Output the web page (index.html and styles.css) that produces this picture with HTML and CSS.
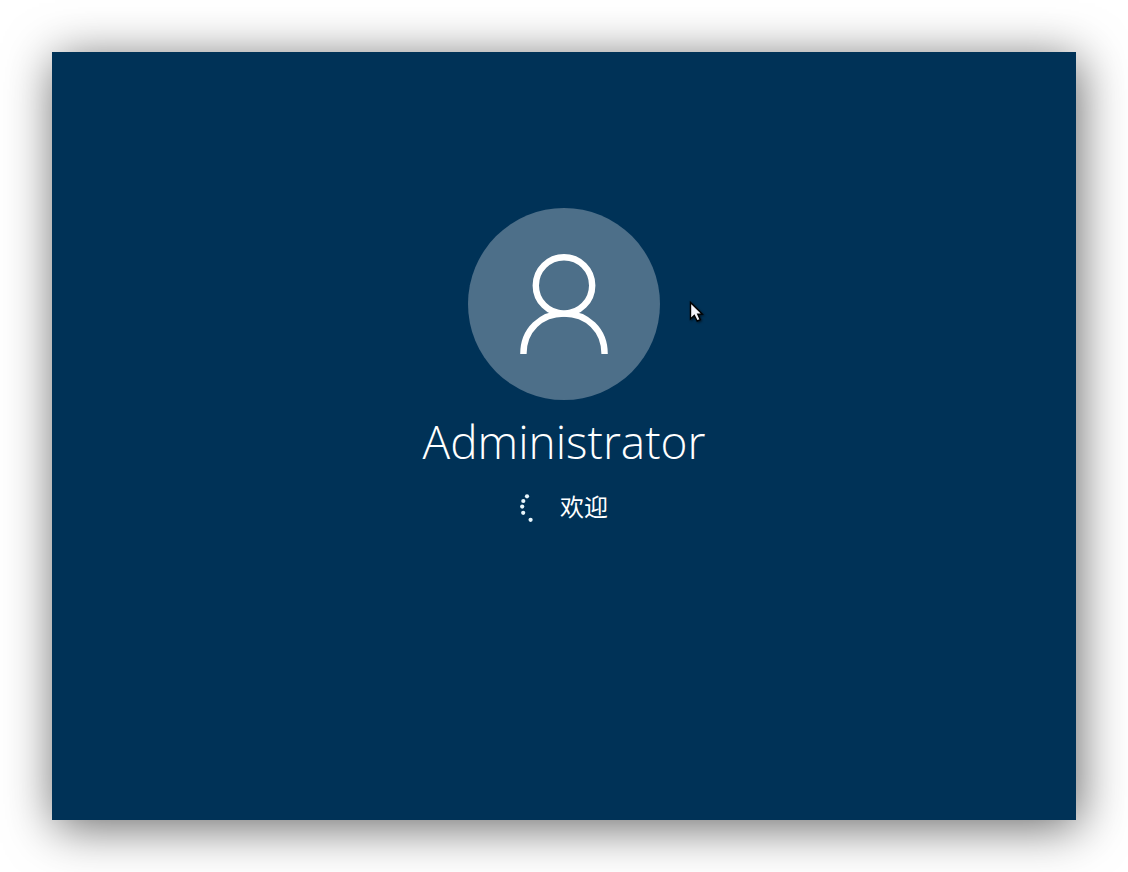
FILE: index.html
```html
<!DOCTYPE html>
<html lang="zh-CN">
<head>
<meta charset="utf-8">
<meta name="viewport" content="width=device-width, initial-scale=1">
<title>Administrator</title>
<link rel="stylesheet" href="styles.css">
</head>
<body>
<main class="screen">
  <div class="avatar">
    <svg class="avatar-icon" viewBox="0 0 192 192" aria-hidden="true">
      <circle cx="96" cy="77.4" r="28.2"/>
      <path d="M55.4 146C55.4 122 73 105.6 96 105.6S136.600 122 136.600 146"/>
    </svg>
    <svg class="pointer" viewBox="0 0 18 24" aria-hidden="true">
      <path d="M3.500 3.500V20L7.300 16.500L10.200 22L13.300 20.600L10.800 15.100H15.200Z"/>
    </svg>
  </div>
  <h1 class="name">Administrator</h1>
  <div class="status" role="status">
    <svg class="spinner" viewBox="0 0 28 28" aria-hidden="true">
      <circle cx="7" cy="4.300" r="2.100"/>
      <circle cx="3.300" cy="9" r="2.100"/>
      <circle cx="2.200" cy="14.600" r="2.100"/>
      <circle cx="3.200" cy="20.800" r="2.100"/>
      <circle cx="10.600" cy="27.800" r="2.100"/>
    </svg>
    <span>欢迎</span>
  </div>
</main>
</body>
</html>
```
FILE: styles.css
```css
* { box-sizing: border-box; }

body {
  margin: 0;
  min-height: 100vh;
  padding: 52px;
  display: flex;
  background: #fff;
  overflow: hidden;
}

.screen {
  flex: 1;
  display: flex;
  flex-direction: column;
  align-items: center;
  padding: 156px 24px 24px;
  background: #003257;
  color: #fff;
  box-shadow: 3px 7px 46px rgba(0, 0, 0, 0.6);
  font-family: "Open Sans", "Noto Sans CJK SC", sans-serif;
}

.avatar {
  position: relative;
  width: 192px;
  height: 192px;
  border-radius: 50%;
  background: #4d6f89;
}

.avatar-icon {
  display: block;
  width: 100%;
  height: 100%;
  fill: none;
  stroke: #fff;
  stroke-width: 6.4;
}

.pointer {
  position: absolute;
  left: 219px;
  top: 91px;
  width: 18px;
  height: 24px;
  fill: #f4f4fa;
  stroke: #000;
  stroke-width: 1.4;
  filter: drop-shadow(1px 1px 1px rgba(0, 0, 0, 0.6));
}

.name {
  margin: 7px 0 0;
  font-size: 46px;
  font-weight: 300;
  line-height: 68px;
}

.status {
  display: flex;
  align-items: center;
  gap: 12px;
  margin-top: 13px;
  font-family: "Noto Sans CJK SC", sans-serif;
  font-size: 24px;
  line-height: 36px;
}

.spinner {
  width: 28px;
  height: 28px;
  overflow: visible;
  fill: #e8f6fc;
}
```
